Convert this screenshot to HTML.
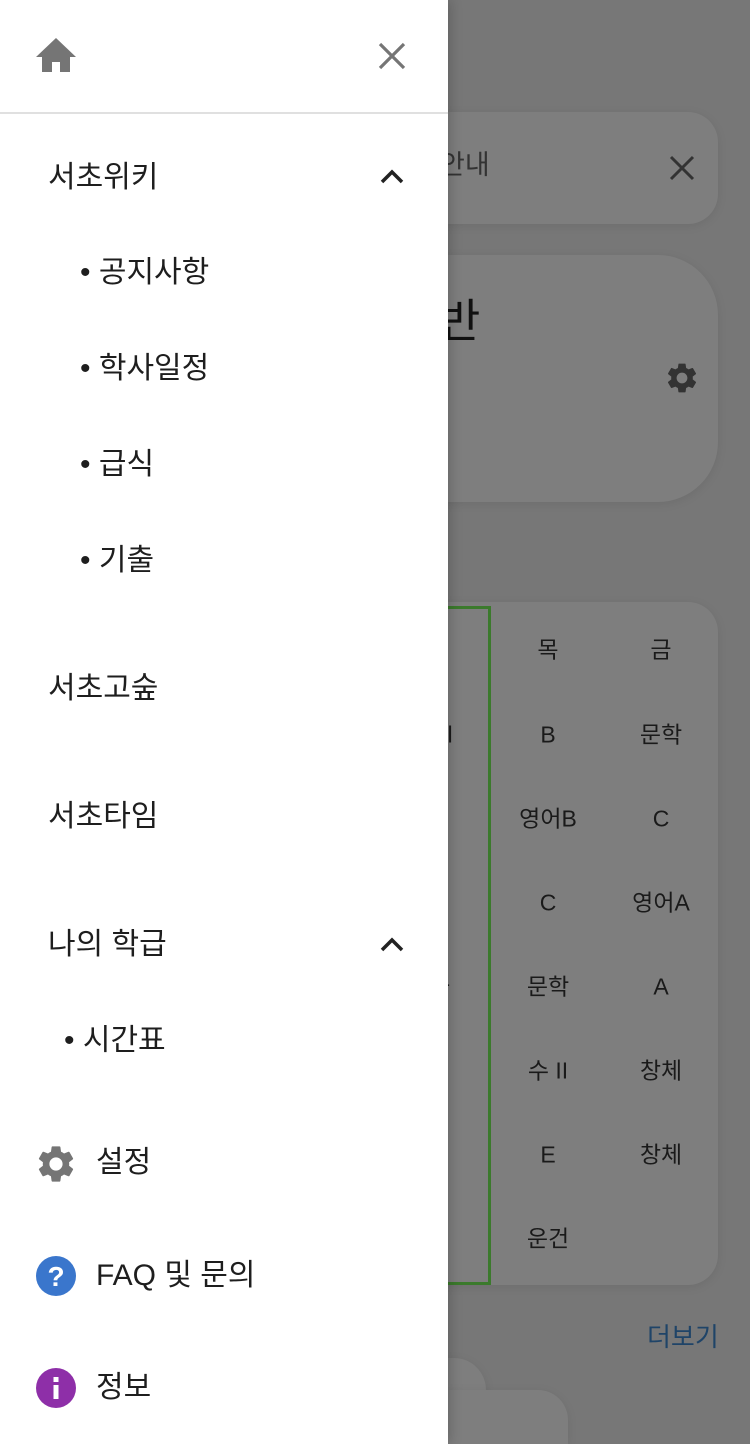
<!DOCTYPE html>
<html style="width:750px;height:1444px;overflow:hidden"><head><meta charset="utf-8"><style>
*{margin:0;padding:0;box-sizing:border-box}
body{width:750px;height:1444px;overflow:hidden;background:#777;position:relative;font-family:"Liberation Sans","Noto Sans CJK KR",sans-serif}
.a{position:absolute}
.card{position:absolute;background:#7e7e7e;box-shadow:0 2px 10px rgba(0,0,0,0.08)}
.t{position:absolute;color:#1a1a1a;font-size:23px;line-height:1;transform:translate(-50%,-50%);white-space:nowrap}
.drawer{position:absolute;left:0;top:0;width:448px;height:1444px;background:#fff;box-shadow:2px 0 12px rgba(0,0,0,.2)}
.m{position:absolute;font-size:30px;color:#1e1e1e;line-height:1;transform:translateY(-50%);white-space:nowrap}
</style></head><body>
<div class="card" style="left:380px;top:112px;width:338px;height:112px;border-radius:30px"></div>
<div class="a" style="left:440px;top:152px;font-size:27px;color:#333;line-height:1">안내</div>
<svg class="a" style="left:668px;top:154px" width="28" height="28" viewBox="0 0 28 28"><path d="M3 3L25 25M25 3L3 25" stroke="#333" stroke-width="3"/></svg>
<div class="card" style="left:380px;top:255px;width:338px;height:247px;border-radius:60px"></div>
<div class="a" style="left:438px;top:298px;font-size:46px;color:#111;line-height:1">반</div>
<svg class="a" style="left:664px;top:360px" width="36" height="36" viewBox="0 0 24 24"><path fill="#333" d="M19.14 12.94c.04-.3.06-.61.06-.94 0-.32-.02-.64-.07-.94l2.030-1.58a.49.49 0 0 0 .12-.61l-1.92-3.32a.49.49 0 0 0-.59-.22l-2.39.96c-.5-.38-1.03-.7-1.62-.94l-.36-2.54a.48.48 0 0 0-.48-.41h-3.84c-.24 0-.43.17-.47.41l-.36 2.54c-.59.24-1.13.57-1.62.94l-2.39-.96a.48.48 0 0 0-.59.22L2.74 8.870c-.12.21-.08.47.12.61l2.03 1.58c-.05.3-.09.63-.09.94s.02.64.07.94l-2.03 1.58a.49.49 0 0 0-.12.61l1.92 3.32c.12.22.37.29.59.22l2.39-.96c.5.38 1.03.7 1.62.94l.36 2.54c.05.24.24.41.48.41h3.84c.24 0 .44-.17.47-.41l.36-2.54c.59-.24 1.13-.56 1.62-.94l2.39.96c.22.08.47 0 .59-.22l1.92-3.32c.12-.22.07-.47-.12-.61l-2.01-1.58zM12 15.6c-1.98 0-3.6-1.62-3.6-3.6s1.62-3.6 3.6-3.6 3.6 1.62 3.6 3.6-1.62 3.6-3.6 3.6z"/></svg>
<div class="card" style="left:380px;top:602px;width:338px;height:683px;border-radius:30px"></div>
<div class="a" style="left:380px;top:606px;width:111px;height:679px;border:3px solid #3b7a2c"></div>
<div class="t" style="left:548px;top:650px">목</div><div class="t" style="left:661px;top:650px">금</div>
<div class="t" style="left:548px;top:735px">B</div><div class="t" style="left:661px;top:735px">문학</div>
<div class="t" style="left:548px;top:819px">영어B</div><div class="t" style="left:661px;top:819px">C</div>
<div class="t" style="left:548px;top:903px">C</div><div class="t" style="left:661px;top:903px">영어A</div>
<div class="t" style="left:548px;top:987px">문학</div><div class="t" style="left:661px;top:987px">A</div>
<div class="t" style="left:548px;top:1071px">수 II</div><div class="t" style="left:661px;top:1071px">창체</div>
<div class="t" style="left:548px;top:1155px">E</div><div class="t" style="left:661px;top:1155px">창체</div>
<div class="t" style="left:548px;top:1239px">운건</div>
<div class="t" style="left:450px;top:735px">l</div>
<div class="t" style="left:444px;top:987px">ㅏ</div>
<div class="a" style="left:647px;top:1324px;font-size:26px;color:#1f4468;line-height:1">더보기</div>
<div class="card" style="left:380px;top:1358px;width:106px;height:64px;border-radius:32px"></div>
<div class="card" style="left:380px;top:1390px;width:188px;height:54px;border-radius:30px 30px 0 0"></div>

<div class="drawer">
<svg class="a" style="left:36px;top:37px" width="40" height="36" viewBox="0 0 40 36"><path fill="#757575" d="M20 1L0 20h6v15h10V25h8v10h10V20h6z"/></svg>
<svg class="a" style="left:378px;top:42px" width="28" height="28" viewBox="0 0 28 28"><path d="M2 2L26 26M26 2L2 26" stroke="#757575" stroke-width="3.2"/></svg>
<div class="a" style="left:0;top:112px;width:448px;height:2px;background:#e0e0e0"></div>
<div class="m" style="left:48px;top:178px">서초위키</div>
<svg class="a" style="left:380px;top:168px" width="24" height="16" viewBox="0 0 24 16"><path d="M2 14L12 4l10 10" stroke="#222" stroke-width="3.5" fill="none"/></svg>
<div class="m" style="left:80px;top:273px">• 공지사항</div>
<div class="m" style="left:80px;top:369px">• 학사일정</div>
<div class="m" style="left:80px;top:465px">• 급식</div>
<div class="m" style="left:80px;top:561px">• 기출</div>
<div class="m" style="left:48px;top:689px">서초고숲</div>
<div class="m" style="left:48px;top:817px">서초타임</div>
<div class="m" style="left:48px;top:945px">나의 학급</div>
<svg class="a" style="left:380px;top:936px" width="24" height="16" viewBox="0 0 24 16"><path d="M2 14L12 4l10 10" stroke="#222" stroke-width="3.5" fill="none"/></svg>
<div class="m" style="left:64px;top:1041px">• 시간표</div>
<svg class="a" style="left:34px;top:1142px" width="44" height="44" viewBox="0 0 24 24"><path fill="#757575" d="M19.14 12.94c.04-.3.06-.61.06-.94 0-.32-.02-.64-.07-.94l2.03-1.58a.49.49 0 0 0 .12-.61l-1.92-3.32a.49.49 0 0 0-.59-.22l-2.39.96c-.5-.38-1.03-.7-1.62-.94l-.36-2.54a.48.48 0 0 0-.48-.41h-3.84c-.24 0-.43.17-.47.41l-.36 2.54c-.59.24-1.13.57-1.62.94l-2.39-.96a.48.48 0 0 0-.59.22L2.74 8.87c-.12.21-.08.47.12.61l2.03 1.58c-.05.3-.09.63-.09.94s.02.64.07.94l-2.03 1.58a.49.49 0 0 0-.12.61l1.92 3.32c.12.22.37.29.59.22l2.39-.96c.5.38 1.03.7 1.62.94l.36 2.54c.05.24.24.41.48.41h3.84c.24 0 .44-.17.47-.41l.36-2.54c.59-.24 1.13-.56 1.62-.94l2.39.96c.22.08.47 0 .59-.22l1.92-3.32c.12-.22.07-.47-.12-.61l-2.01-1.58zM12 15.6c-1.98 0-3.6-1.62-3.6-3.6s1.62-3.6 3.6-3.6 3.6 1.62 3.6 3.6-1.62 3.6-3.6 3.6z"/></svg>
<div class="m" style="left:96px;top:1163px">설정</div>
<svg class="a" style="left:36px;top:1256px" width="40" height="40" viewBox="0 0 40 40"><circle cx="20" cy="20" r="20" fill="#3a76cc"/><text x="20" y="30" text-anchor="middle" font-family="Liberation Sans" font-weight="bold" font-size="28" fill="#fff">?</text></svg>
<div class="m" style="left:96px;top:1276px">FAQ 및 문의</div>
<svg class="a" style="left:36px;top:1368px" width="40" height="40" viewBox="0 0 40 40"><circle cx="20" cy="20" r="20" fill="#8e2fa8"/><rect x="17.5" y="9" width="5" height="5" fill="#fff"/><rect x="17.5" y="17" width="5" height="14" fill="#fff"/></svg>
<div class="m" style="left:96px;top:1388px">정보</div>
</div>
</body></html>
